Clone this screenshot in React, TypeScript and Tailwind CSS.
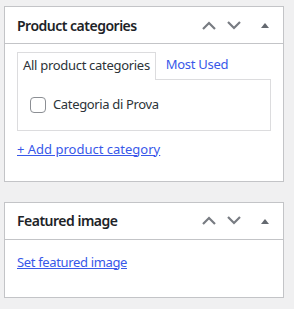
import { ReactNode } from 'react';

const font = { fontFamily: '"Noto Sans", "Open Sans", sans-serif' };

function ChevronUp() {
  return (
    <svg width="14" height="9" viewBox="0 0 14 9" fill="none">
      <path d="M1 8 L7 2 L13 8" stroke="#787c82" strokeWidth="2.2" />
    </svg>
  );
}

function ChevronDown() {
  return (
    <svg width="14" height="9" viewBox="0 0 14 9" fill="none">
      <path d="M1 1 L7 7 L13 1" stroke="#787c82" strokeWidth="2.2" />
    </svg>
  );
}

function Caret() {
  return (
    <svg width="8" height="6" viewBox="0 0 8 6">
      <path d="M0 6 L4 1 L8 6 Z" fill="#646970" />
    </svg>
  );
}

interface BoxProps {
  title: string;
  children: ReactNode;
}

function Postbox({ title, children }: BoxProps) {
  return (
    <div className="w-[280px] border border-[#c3c4c7] bg-white">
      <div className="flex h-[37px] items-center border-b border-[#c3c4c7]">
        <h2 className="flex-1 pl-3 text-[14px] font-semibold tracking-[-0.5px] text-[#1d2327]">{title}</h2>
        <button className="flex h-[36px] w-[24px] items-center justify-center">
          <ChevronUp />
        </button>
        <button className="flex h-[36px] w-[26px] items-center justify-center">
          <ChevronDown />
        </button>
        <button className="flex h-[36px] w-[36px] items-center justify-center">
          <Caret />
        </button>
      </div>
      {children}
    </div>
  );
}

export default function App() {
  return (
    <div className="min-h-[309px] bg-[#f0f0f1] pl-1 pt-[6px]" style={font}>
      <Postbox title="Product categories">
        <div className="px-3 pb-[22px] pt-2">
          <div className="flex items-end text-[13px] tracking-[-0.3px]">
            <div className="relative -mb-px border border-b-0 border-[#dcdcde] bg-white px-[5px] pb-[4px] pt-[3px] text-[#2c3338]">
              All product categories
            </div>
            <div className="ml-[10px] pb-[4px] pt-[3px] text-[#3858e9]">Most Used</div>
          </div>
          <div className="flex h-[52px] items-center border border-[#dcdcde] pl-3">
            <span className="h-4 w-4 rounded-[4px] border border-[#8c8f94] bg-white" />
            <span className="ml-[7px] text-[13px] tracking-[-0.35px] text-[#2c3338]">Categoria di Prova</span>
          </div>
          <a href="#" className="mt-[8px] block text-[13px] leading-5 text-[#3858e9] underline">
            + Add product category
          </a>
        </div>
      </Postbox>
      <div className="h-5" />
      <Postbox title="Featured image">
        <div className="px-3 pb-[25px] pt-[12px]">
          <a href="#" className="block text-[13px] leading-5 tracking-[-0.35px] text-[#3858e9] underline">
            Set featured image
          </a>
        </div>
      </Postbox>
    </div>
  );
}
